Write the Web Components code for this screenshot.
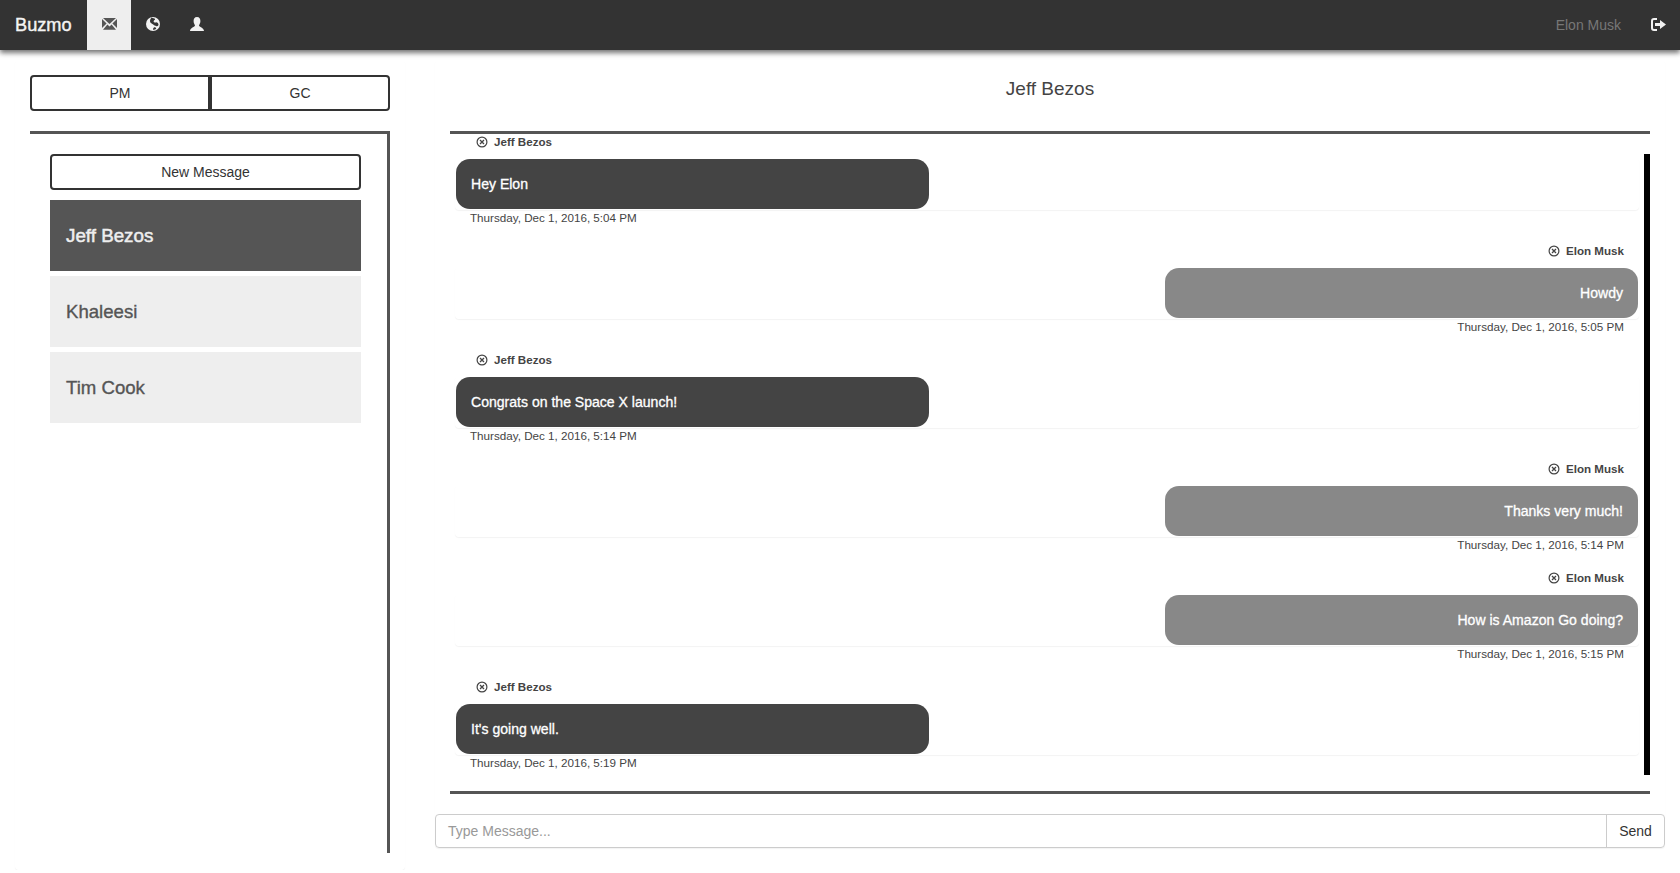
<!DOCTYPE html>
<html>
<head>
<meta charset="utf-8">
<title>Buzmo</title>
<style>
    html, body { margin: 0; background: #fff; }
    body { font-family: "Liberation Sans", Arial, sans-serif; font-size: 14px; color: #333; }
</style>
</head>
<body>
<buzmo-app></buzmo-app>

<script>
const navTemplate = document.createElement('template');
navTemplate.innerHTML = `
<style>
    :host { display: flex; align-items: stretch; height: 50px; background: #333; box-shadow: 0 3px 5px rgba(0,0,0,.55); position: relative; z-index: 2; }
    .brand { width: 72px; padding-left: 15px; line-height: 50px; font-size: 18.2px; color: #f4f4f4; -webkit-text-stroke: .4px #f4f4f4; }
    .tab { width: 44px; display: flex; align-items: center; justify-content: center; padding-bottom: 2px; box-sizing: border-box; }
    .tab.active { background: #eee; }
    svg { display: block; }
    .space { flex: 1; }
    .who { color: #777; line-height: 50px; margin-right: 30px; }
    .out { display: flex; align-items: center; margin-right: 14px; padding-bottom: 2px; }
</style>
<div class="brand">Buzmo</div>
<div class="tab active">
    <svg width="15" height="12" viewBox="0 0 15 12" fill="#555">
        <path d="M1 0H14L7.5 6ZM0 1L4.6 5.5 0 10ZM15 1L10.4 5.5 15 10ZM1 11.8L5.4 6.6 7.5 8.4 9.6 6.6 14 11.8Z"/>
    </svg>
</div>
<div class="tab">
    <svg width="14" height="14" viewBox="0 0 14 14">
        <circle cx="7" cy="7" r="7" fill="#f2f2f2"/>
        <path d="M5.5.6C7 1.5 8.5 1 9 2 9.5 3 7.5 3.2 7.6 4.4 7.7 5.4 9 5.6 10 5.4 11 5.2 12 6 12.4 7 12.8 8 12 9.6 10.5 9.2 9 8.8 8 8.4 7.2 7.6 6.2 6.6 5 6.6 4.4 5.6 3.8 4.6 3.8 2.4 5.5.6ZM8 10.4C9 10.2 10 10.8 10.2 11.6 9.4 12.6 8.4 13 7.4 13 7 12.2 7 10.6 8 10.4Z" fill="#333"/>
    </svg>
</div>
<div class="tab">
    <svg width="14" height="14" viewBox="0 0 14 14" fill="#f2f2f2">
        <path d="M7 0C9.5 0 10.4 2 10.4 4 10.4 6 9.5 7.4 9 8.4 9 10 14 10.4 14 14H0C0 10.4 5 10 5 8.4 4.5 7.4 3.6 6 3.6 4 3.6 2 4.5 0 7 0Z"/>
    </svg>
</div>
<div class="space"></div>
<div class="who">Elon Musk</div>
<div class="out">
    <svg width="15" height="13" viewBox="0 0 15 13">
        <path d="M6 1H3C1.8 1 1 1.8 1 3V10C1 11.2 1.8 12 3 12H6" fill="none" stroke="#f2f2f2" stroke-width="2"/>
        <path d="M4 5H9V2L15 6.5 9 11V8H4Z" fill="#f2f2f2"/>
    </svg>
</div>
`;

class BuzmoNav extends HTMLElement {
    connectedCallback() {
        const shadowRoot = this.attachShadow({ mode: 'open' });
        shadowRoot.appendChild(navTemplate.content.cloneNode(true));
    }
}
customElements.define('buzmo-nav', BuzmoNav);

const itemTemplate = document.createElement('template');
itemTemplate.innerHTML = `
<style>
    :host { display: block; height: 71px; line-height: 72px; padding-left: 16px; background: #eee; color: #555; font-size: 18.6px; -webkit-text-stroke: .35px currentColor; }
    :host([active]) { background: #555; color: #eee; font-size: 18.8px; -webkit-text-stroke: .5px currentColor; }
</style>
<slot></slot>
`;

class ConvoItem extends HTMLElement {
    connectedCallback() {
        const shadowRoot = this.attachShadow({ mode: 'open' });
        shadowRoot.appendChild(itemTemplate.content.cloneNode(true));
    }
}
customElements.define('convo-item', ConvoItem);

const sidebarTemplate = document.createElement('template');
sidebarTemplate.innerHTML = `
<style>
    :host { display: block; box-sizing: border-box; width: 390px; height: 810px; padding: 15px 15px 0; border-radius: 4px; box-shadow: 0 1px 1px rgba(0,0,0,.05); }
    .switch { display: flex; margin-bottom: 20px; }
    .btn { box-sizing: border-box; height: 36px; line-height: 32px; text-align: center; border: 2px solid #333; background: #fff; color: #333; }
    .switch .btn { flex: 1; }
    .switch .btn:first-child { border-radius: 4px 0 0 4px; }
    .switch .btn:last-child { border-radius: 0 4px 4px 0; }
    .box { height: 722px; box-sizing: border-box; border-top: 3px solid #555; border-right: 3px solid #555; padding: 20px 26px 0 20px; display: flex; flex-direction: column; gap: 5px; }
    .new { border-radius: 4px; margin-bottom: 5px; }
</style>
<div class="switch">
    <div class="btn">PM</div>
    <div class="btn">GC</div>
</div>
<div class="box">
    <div class="btn new">New Message</div>
    <slot></slot>
</div>
`;

class BuzmoSidebar extends HTMLElement {
    connectedCallback() {
        const shadowRoot = this.attachShadow({ mode: 'open' });
        shadowRoot.appendChild(sidebarTemplate.content.cloneNode(true));
    }
}
customElements.define('buzmo-sidebar', BuzmoSidebar);

const messageTemplate = document.createElement('template');
messageTemplate.innerHTML = `
<style>
    :host { display: block; height: 109px; font-size: 11.65px; color: #444; }
    .name { display: flex; align-items: center; gap: 6px; height: 15px; padding: 0 21px; margin-bottom: 9px; font-size: 11.6px; font-weight: bold; color: #444; }
    .card { box-sizing: border-box; height: 52px; padding: 1px; border-radius: 4px; box-shadow: 0 1px 1px rgba(0,0,0,.05); display: flex; }
    .bubble { box-sizing: border-box; width: 40%; height: 50px; line-height: 51px; padding: 0 15px; border-radius: 14px; background: #444; color: #fff; font-size: 14.05px; -webkit-text-stroke: .3px #fff; }
    .stamp { height: 16px; line-height: 16px; padding: 0 15px; }
    :host([mine]) .name { justify-content: flex-end; padding-right: 15px; }
    :host([mine]) .card { justify-content: flex-end; }
    :host([mine]) .bubble { background: #888; text-align: right; }
    :host([mine]) .stamp { text-align: right; }
    svg { display: block; }
</style>
<div class="name">
    <svg width="12" height="12" viewBox="0 0 12 12" fill="none" stroke="#444">
        <circle cx="6" cy="6" r="4.9" stroke-width="1.2"/>
        <path d="M4 4L8 8M8 4L4 8" stroke-width="1.3"/>
    </svg>
    <span class="who"></span>
</div>
<div class="card"><div class="bubble"><slot></slot></div></div>
<div class="stamp"></div>
`;

class ChatMessage extends HTMLElement {
    connectedCallback() {
        const shadowRoot = this.attachShadow({ mode: 'open' });
        shadowRoot.appendChild(messageTemplate.content.cloneNode(true));
        shadowRoot.querySelector('.who').textContent = this.getAttribute('from');
        shadowRoot.querySelector('.stamp').textContent = this.getAttribute('time');
    }
}
customElements.define('chat-message', ChatMessage);

const chatTemplate = document.createElement('template');
chatTemplate.innerHTML = `
<style>
    :host { display: block; box-sizing: border-box; width: 1230px; height: 788px; border-radius: 4px; box-shadow: 0 1px 1px rgba(0,0,0,.05); }
    .title { margin: 0 15px; padding: 14px 0 27px; height: 30px; line-height: 30px; text-align: center; font-size: 19px; color: #444; }
    .log { margin: 0 15px; height: 663px; box-sizing: border-box; border-top: 3px solid #555; border-bottom: 3px solid #555; display: flex; overflow: hidden; }
    .messages { flex: 1; padding-left: 5px; min-width: 0; margin-right: 5px; }
    .thumb { width: 6px; height: 621px; margin-top: 20px; background: #000; }
    .send { display: flex; height: 34px; margin-top: 20px; box-sizing: border-box; border: 1px solid #ccc; border-radius: 4px; }
    .input { flex: 1; line-height: 32px; padding-left: 12px; color: #999; }
    .go { width: 58px; box-sizing: border-box; border-left: 1px solid #ccc; line-height: 32px; text-align: center; color: #333; }
</style>
<div class="title"></div>
<div class="log">
    <div class="messages"><slot></slot></div>
    <div class="thumb"></div>
</div>
<div class="send">
    <div class="input">Type Message...</div>
    <div class="go">Send</div>
</div>
`;

class BuzmoChat extends HTMLElement {
    connectedCallback() {
        const shadowRoot = this.attachShadow({ mode: 'open' });
        shadowRoot.appendChild(chatTemplate.content.cloneNode(true));
        shadowRoot.querySelector('.title').textContent = this.getAttribute('with');
    }
}
customElements.define('buzmo-chat', BuzmoChat);

const appTemplate = document.createElement('template');
appTemplate.innerHTML = `
<style>
    :host { display: block; }
    main { display: flex; gap: 30px; padding: 10px 15px 0; align-items: flex-start; }
</style>
<buzmo-nav></buzmo-nav>
<main>
    <buzmo-sidebar>
        <convo-item active>Jeff Bezos</convo-item>
        <convo-item>Khaleesi</convo-item>
        <convo-item>Tim Cook</convo-item>
    </buzmo-sidebar>
    <buzmo-chat with="Jeff Bezos">
        <chat-message from="Jeff Bezos" time="Thursday, Dec 1, 2016, 5:04 PM">Hey Elon</chat-message>
        <chat-message mine from="Elon Musk" time="Thursday, Dec 1, 2016, 5:05 PM">Howdy</chat-message>
        <chat-message from="Jeff Bezos" time="Thursday, Dec 1, 2016, 5:14 PM">Congrats on the Space X launch!</chat-message>
        <chat-message mine from="Elon Musk" time="Thursday, Dec 1, 2016, 5:14 PM">Thanks very much!</chat-message>
        <chat-message mine from="Elon Musk" time="Thursday, Dec 1, 2016, 5:15 PM">How is Amazon Go doing?</chat-message>
        <chat-message from="Jeff Bezos" time="Thursday, Dec 1, 2016, 5:19 PM">It's going well.</chat-message>
    </buzmo-chat>
</main>
`;

class BuzmoApp extends HTMLElement {
    connectedCallback() {
        const shadowRoot = this.attachShadow({ mode: 'open' });
        shadowRoot.appendChild(appTemplate.content.cloneNode(true));
    }
}
customElements.define('buzmo-app', BuzmoApp);
</script>
</body>
</html>
